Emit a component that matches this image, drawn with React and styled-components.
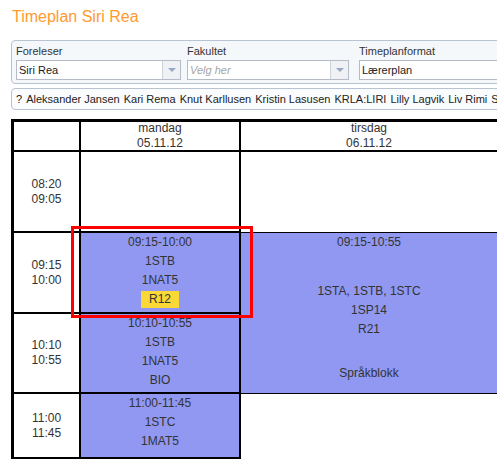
import React from 'react';
import styled, { createGlobalStyle } from 'styled-components';

const GlobalStyle = createGlobalStyle`
  html, body { margin: 0; padding: 0; background: #fff; overflow: hidden; }
  body { font-family: "Liberation Sans", Arial, sans-serif; color: #333; }
`;

const teachers = ['?', 'Aleksander Jansen', 'Kari Rema', 'Knut Karllusen', 'Kristin Lasusen', 'KRLA:LIRI', 'Lilly Lagvik', 'Liv Rimi', 'Siri Rea'];

const times = [
  ['08:20', '09:05'],
  ['09:15', '10:00'],
  ['10:10', '10:55'],
  ['11:00', '11:45'],
];

const App = () => {
  return (
    <Page>
      <GlobalStyle />
      <Title>Timeplan Siri Rea</Title>

      <FilterPanel>
        <Field width="165px" gapRight="6px">
          <Label>Foreleser</Label>
          <Select>
            <SelectText>Siri Rea</SelectText>
            <Trigger><Arrow /></Trigger>
          </Select>
        </Field>
        <Field width="162px" gapRight="10px">
          <Label>Fakultet</Label>
          <Select>
            <SelectText placeholder>Velg her</SelectText>
            <Trigger><Arrow /></Trigger>
          </Select>
        </Field>
        <Field width="200px" gapRight="0">
          <Label>Timeplanformat</Label>
          <Select>
            <SelectText>Lærerplan</SelectText>
          </Select>
        </Field>
      </FilterPanel>

      <NameBar>
        {teachers.map((t) => (
          <Name key={t}>{t}</Name>
        ))}
      </NameBar>

      <TableWrap>
        <Grid>
          <HeadCell />
          <HeadCell>mandag<br />05.11.12</HeadCell>
          <HeadCell>tirsdag<br />06.11.12</HeadCell>
          <HeadCell />

          <TimeCell row={2}>{times[0][0]}<br />{times[0][1]}</TimeCell>
          <TimeCell row={3}>{times[1][0]}<br />{times[1][1]}</TimeCell>
          <TimeCell row={4}>{times[2][0]}<br />{times[2][1]}</TimeCell>
          <TimeCell row={5}>{times[3][0]}<br />{times[3][1]}</TimeCell>
          <TimeCell row={6} />

          <DayCell row={2} />
          <EventCell row={3}>
            <Line>09:15-10:00</Line>
            <Line>1STB</Line>
            <Line>1NAT5</Line>
            <Line><Room>R12</Room></Line>
          </EventCell>
          <EventCell row={4}>
            <Line>10:10-10:55</Line>
            <Line>1STB</Line>
            <Line>1NAT5</Line>
            <Line>BIO</Line>
          </EventCell>
          <EventCell row={5}>
            <Line>11:00-11:45</Line>
            <Line>1STC</Line>
            <Line>1MAT5</Line>
          </EventCell>
          <DayCell row={6} />

          <SpanColumn col={3}>
            <Spacer />
            <BlockEvent>
              <Line>09:15-10:55</Line>
              <BlockGroup>
                <Line>1STA, 1STB, 1STC</Line>
                <Line>1SP14</Line>
                <Line>R21</Line>
              </BlockGroup>
              <BlockNote>Språkblokk</BlockNote>
            </BlockEvent>
          </SpanColumn>
          <SpanColumn col={4} />
        </Grid>
        <Highlight />
      </TableWrap>
    </Page>
  );
};

const Page = styled.div`
  width: 760px;
  padding: 7px 0 0 11px;
`;

const Title = styled.h1`
  margin: 0 0 14px 1px;
  font-size: 16px;
  line-height: 19px;
  font-weight: normal;
  color: #ff9a2f;
`;

const FilterPanel = styled.div`
  display: flex;
  align-items: flex-start;
  height: 36px;
  padding: 3px 4px;
  border: 1px solid #b9c4d2;
  border-radius: 4px;
  background: #f5f8fb;
`;

const Field = styled.div`
  display: flex;
  flex-direction: column;
  width: ${(p) => p.width};
  margin-right: ${(p) => p.gapRight};
`;

const Label = styled.div`
  font-size: 11px;
  line-height: 14px;
  margin-bottom: 2px;
  color: #333;
`;

const Select = styled.div`
  display: flex;
  height: 18px;
  border: 1px solid #b5bcc7;
  background: #fff;
`;

const SelectText = styled.div`
  flex: 1;
  padding-left: 2px;
  font-size: 11px;
  line-height: 18px;
  color: ${(p) => (p.placeholder ? '#a5a5a5' : '#222')};
  font-style: ${(p) => (p.placeholder ? 'italic' : 'normal')};
`;

const Trigger = styled.div`
  width: 17px;
  display: flex;
  align-items: center;
  justify-content: center;
  border-left: 1px solid #cdd3db;
  background: #eff1f4;
`;

const Arrow = styled.div`
  width: 0;
  height: 0;
  border-left: 4px solid transparent;
  border-right: 4px solid transparent;
  border-top: 4px solid #97a8c4;
`;

const NameBar = styled.div`
  display: flex;
  gap: 4px;
  margin-top: 4px;
  height: 20px;
  padding: 0 4px;
  border: 1px solid #b9c4d2;
  border-radius: 4px;
  background: #fbfcfd;
  font-size: 11px;
  line-height: 20px;
  color: #222;
  white-space: nowrap;
`;

const Name = styled.span``;

const TableWrap = styled.div`
  position: relative;
  margin-top: 9px;
`;

const Grid = styled.div`
  display: grid;
  grid-template-columns: 65px 158px 256px 200px;
  grid-template-rows: 28px 79px 79px 78px 63px 40px;
  gap: 2px;
  border-top: 3px solid #000;
  border-left: 3px solid #000;
  background: #000;
  font-size: 12px;
  color: #333;
`;

const HeadCell = styled.div`
  background: #fff;
  text-align: center;
  line-height: 15px;
  display: flex;
  flex-direction: column;
  justify-content: center;
`;

const TimeCell = styled.div`
  grid-column: 1;
  grid-row: ${(p) => p.row};
  background: #fff;
  display: flex;
  flex-direction: column;
  justify-content: center;
  text-align: center;
  line-height: 15px;
`;

const DayCell = styled.div`
  grid-column: 2;
  grid-row: ${(p) => p.row};
  background: #fff;
`;

const EventCell = styled.div`
  grid-column: 2;
  grid-row: ${(p) => p.row};
  background: #9098f1;
  text-align: center;
`;

const Line = styled.div`
  line-height: 19px;
  height: 19px;
`;

const Room = styled.span`
  display: inline-block;
  line-height: 17px;
  padding: 0 8px;
  background: #fad835;
`;

const SpanColumn = styled.div`
  grid-column: ${(p) => p.col};
  grid-row: 2 / 7;
  background: #fff;
  display: flex;
  flex-direction: column;
`;

const Spacer = styled.div`
  height: 80px;
`;

const BlockEvent = styled.div`
  height: 160px;
  border-top: 1px solid #000;
  border-bottom: 1px solid #000;
  background: #9098f1;
  text-align: center;
  display: flex;
  flex-direction: column;
`;

const BlockGroup = styled.div`
  margin-top: 30px;
`;

const BlockNote = styled.div`
  margin-top: 25px;
  line-height: 19px;
`;

const Highlight = styled.div`
  position: absolute;
  left: 60px;
  top: 107px;
  width: 176px;
  height: 86px;
  border: 3px solid #ff0000;
  pointer-events: none;
`;

export default App;
